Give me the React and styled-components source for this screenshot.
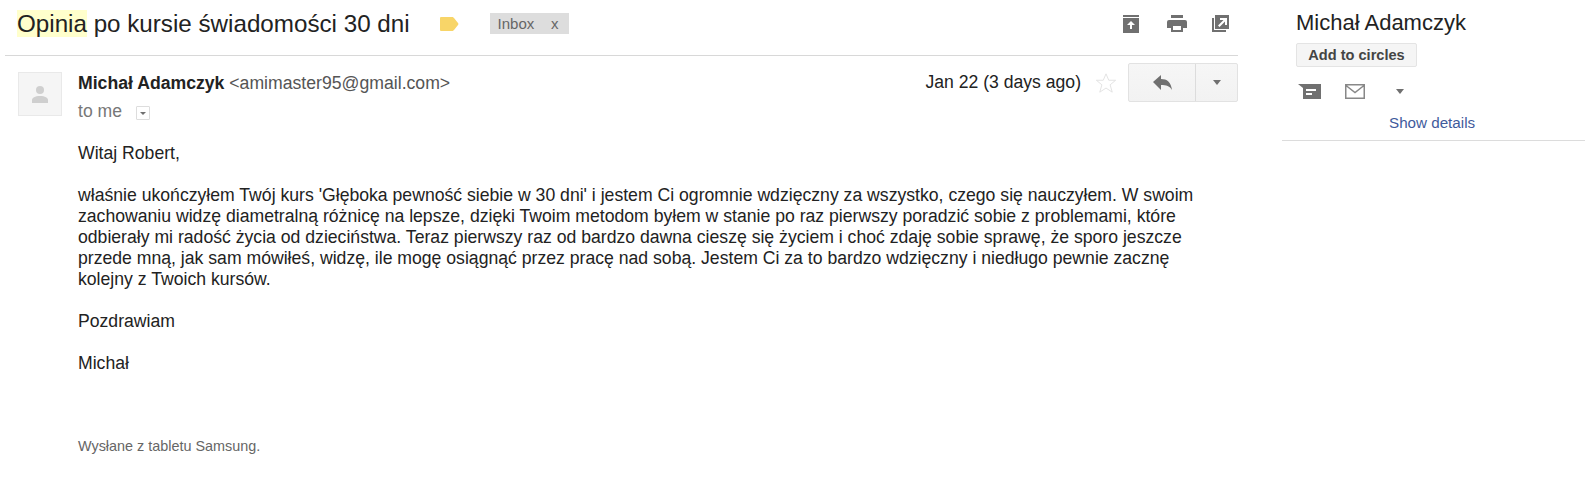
import React from 'react';
import styled, {createGlobalStyle} from 'styled-components';

const GlobalStyle = createGlobalStyle`
  html, body {
    margin: 0;
    background: #fff;
    color: #222;
    font-family: "Liberation Sans", Arial, sans-serif;
  }
`;

const Page = styled.div`
  display: flex;
  width: 1585px;
  height: 477px;
  overflow: hidden;
`;

const Main = styled.div`
  width: 1233px;
  margin-left: 5px;
`;

const Side = styled.aside`
  width: 303px;
  margin-left: 44px;
`;

const SubjectBar = styled.header`
  display: flex;
  align-items: center;
  height: 56px;
  padding: 0 0 8px 12px;
  box-sizing: border-box;
  border-bottom: 1px solid #d8d8d8;
`;

const Subject = styled.h1`
  margin: 0;
  font-size: 24.2px;
  font-weight: 400;
  line-height: 28px;
  color: #222;
`;

const Mark = styled.span`
  background: #ffffcc;
`;

const Tag = styled.svg`
  margin-left: 29px;
  width: 20px;
  height: 16px;
`;

const Label = styled.span`
  display: flex;
  justify-content: space-between;
  width: 79px;
  height: 21px;
  margin-left: 31px;
  padding: 0 10px 0 8px;
  box-sizing: border-box;
  background: #dddddd;
  color: #666;
  font-size: 15px;
  line-height: 21px;
`;

const Tools = styled.div`
  display: flex;
  align-items: center;
  gap: 25px;
  margin-left: auto;
  margin-right: 9px;
`;

const Icon = styled.svg`
  display: block;
  width: ${(p) => p.$w}px;
  height: ${(p) => p.$h}px;
  fill: ${(p) => p.$color || '#707070'};
`;

const OutlineIcon = styled.svg`
  display: block;
  width: ${(p) => p.$w}px;
  height: ${(p) => p.$h}px;
  fill: none;
  stroke: ${(p) => p.$color};
  stroke-width: ${(p) => p.$stroke}px;
`;

const Message = styled.div`
  display: flex;
  padding: 16px 0 0 13px;
`;

const Avatar = styled.div`
  display: flex;
  align-items: center;
  justify-content: center;
  width: 42px;
  height: 42px;
  border: 1px solid #e9e9e9;
  background: #f5f5f5;
  flex: none;
`;

const Content = styled.div`
  flex: 1;
  margin-left: 16px;
  margin-top: -8px;
`;

const TopRow = styled.div`
  display: flex;
  align-items: flex-start;
`;

const Sender = styled.div`
  padding-top: 9px;
  font-size: 17.65px;
  line-height: 20px;
  color: #555;
`;

const SenderName = styled.b`
  color: #222;
`;

const To = styled.div`
  display: flex;
  align-items: center;
  gap: 14px;
  margin-top: 8px;
  color: #777;
  font-size: 17.6px;
  line-height: 20px;
`;

const ToArrow = styled.span`
  display: flex;
  align-items: center;
  justify-content: center;
  width: 14px;
  height: 14px;
  margin-top: 4px;
  box-sizing: border-box;
  border: 1px solid #ddd;
  border-radius: 1px;
`;

const Caret = styled.i`
  display: block;
  width: 0;
  height: 0;
  border-style: solid;
  border-color: ${(p) => p.$color || '#707070'} transparent transparent;
  border-width: ${(p) => p.$h || 5}px ${(p) => p.$w || 4.5}px 0;
`;

const Meta = styled.div`
  display: flex;
  align-items: center;
  margin-left: auto;
  margin-top: -1px;
`;

const DateText = styled.span`
  font-size: 17.6px;
  color: #222;
  margin-right: 14px;
`;

const ReplyGroup = styled.div`
  display: flex;
  height: 37px;
  margin-left: 11px;
  border: 1px solid #e2e2e2;
  border-radius: 2px;
  background: linear-gradient(#f6f6f6, #f2f2f2);
`;

const ReplyBtn = styled.div`
  display: flex;
  align-items: center;
  justify-content: center;
  width: ${(p) => p.$w}px;
  & + & {
    border-left: 1px solid #dcdcdc;
  }
`;

const Body = styled.div`
  margin-top: 22px;
  font-size: 17.64px;
  line-height: 21px;
  color: #222;
`;

const Para = styled.p`
  margin: 0 0 ${(p) => p.$gap ?? 21}px;
  white-space: pre-line;
`;

const Signature = styled.p`
  margin: 64px 0 0;
  font-size: 14.4px;
  line-height: 16px;
  color: #666;
`;

const ContactName = styled.h2`
  margin: 0;
  padding: 11px 0 0 14px;
  font-size: 22px;
  font-weight: 400;
  line-height: 24px;
  color: #222;
`;

const CircleBtn = styled.div`
  width: 121px;
  height: 24px;
  margin: 8px 0 0 14px;
  box-sizing: border-box;
  border: 1px solid #e4e4e4;
  border-radius: 2px;
  background: #f5f5f5;
  color: #444;
  font-size: 14.6px;
  font-weight: 700;
  line-height: 22px;
  text-align: center;
`;

const ContactIcons = styled.div`
  display: flex;
  align-items: center;
  gap: 24px;
  height: 20px;
  margin-top: 14px;
  padding-left: 16px;
`;

const CaretSlot = styled.span`
  margin-left: 7px;
`;

const Details = styled.a`
  display: block;
  margin-top: 13px;
  padding: 0 0 8px 107px;
  border-bottom: 1px solid #dcdcdc;
  color: #3f5b9c;
  font-size: 15.2px;
  line-height: 18px;
`;

const App = () => {
  return (
    <Page>
      <GlobalStyle />
      <Main>
        <SubjectBar>
          <Subject><Mark>Opinia</Mark> po kursie świadomości 30 dni</Subject>
          <Tag viewBox="0 0 20 16">
            <path d="M2 1h11c1 0 1.500.5 2 1l4 5c.5.5.5 1.500 0 2l-4 5c-.5.5-1 1-2 1H2a1 1 0 0 1-1-1V2a1 1 0 0 1 1-1z" fill="#f8d568" />
          </Tag>
          <Label>Inbox<span>x</span></Label>
          <Tools>
            <Icon $w={19} $h={18} viewBox="0 0 19 18">
              <path d="M0 0h16v18H0zM0 2v1h16V2zM8 6l-4 4h3v4h2v-4h3z" fillRule="evenodd" />
            </Icon>
            <Icon $w={20} $h={17} viewBox="0 0 20 17">
              <path d="M4 0h12v3H4zM2 5h16a2 2 0 0 1 2 2v6h-4v4H4v-4H0V7a2 2 0 0 1 2-2z" />
              <path d="M6 11h8v4H6z" fill="#fff" />
            </Icon>
            <Icon $w={17} $h={17} viewBox="0 0 17 17">
              <path d="M3 0h14v14H3zM8 3v2h3.500L6 10.500 7.500 12 13 6.500V10h2V3z" fillRule="evenodd" />
              <path d="M0 3h2v12h12v2H0z" />
            </Icon>
          </Tools>
        </SubjectBar>
        <Message>
          <Avatar>
            <Icon $w={16} $h={17} $color="#cfcfcf" viewBox="0 0 16 17">
              <circle cx="8" cy="4" r="4" />
              <path d="M0 17v-3c0-2 3-4 8-4s8 2 8 4v3z" />
            </Icon>
          </Avatar>
          <Content>
            <TopRow>
              <div>
                <Sender><SenderName>Michał Adamczyk</SenderName> &lt;amimaster95@gmail.com&gt;</Sender>
                <To>to me <ToArrow><Caret $w={3} $h={3} /></ToArrow></To>
              </div>
              <Meta>
                <DateText>Jan 22 (3 days ago)</DateText>
                <OutlineIcon $w={22} $h={22} $color="#e0e0e0" $stroke={1} viewBox="0 0 24 24">
                  <path d="M12 2l3 7h7.500l-6 5 2.300 8L12 17.500 5.200 22l2.300-8-6-5H9z" />
                </OutlineIcon>
                <ReplyGroup>
                  <ReplyBtn $w={66}>
                    <Icon $w={19} $h={15} viewBox="0 0 19 15">
                      <path d="M8 0v4c6 0 10 3 11 11-2-4-6-5-11-5v5L0 7z" />
                    </Icon>
                  </ReplyBtn>
                  <ReplyBtn $w={41}><Caret /></ReplyBtn>
                </ReplyGroup>
              </Meta>
            </TopRow>
            <Body>
              <Para>Witaj Robert,</Para>
              <Para>{`właśnie ukończyłem Twój kurs 'Głęboka pewność siebie w 30 dni' i jestem Ci ogromnie wdzięczny za wszystko, czego się nauczyłem. W swoim
zachowaniu widzę diametralną różnicę na lepsze, dzięki Twoim metodom byłem w stanie po raz pierwszy poradzić sobie z problemami, które
odbierały mi radość życia od dzieciństwa. Teraz pierwszy raz od bardzo dawna cieszę się życiem i choć zdaję sobie sprawę, że sporo jeszcze
przede mną, jak sam mówiłeś, widzę, ile mogę osiągnąć przez pracę nad sobą. Jestem Ci za to bardzo wdzięczny i niedługo pewnie zacznę
kolejny z Twoich kursów.`}</Para>
              <Para>Pozdrawiam</Para>
              <Para $gap={0}>Michał</Para>
              <Signature>Wysłane z tabletu Samsung.</Signature>
            </Body>
          </Content>
        </Message>
      </Main>
      <Side>
        <ContactName>Michał Adamczyk</ContactName>
        <CircleBtn>Add to circles</CircleBtn>
        <ContactIcons>
          <Icon $w={23} $h={15} viewBox="0 0 23 15">
            <path d="M0 0h23v15H5V4zM8 5v2h10V5zM8 9v2h6V9z" fillRule="evenodd" />
          </Icon>
          <OutlineIcon $w={20} $h={15} $color="#888" $stroke={1.5} viewBox="0 0 20 15">
            <path d="M.75.750h18.500v13.500H.75zM1 1.500l9 7 9-7" />
          </OutlineIcon>
          <CaretSlot><Caret /></CaretSlot>
        </ContactIcons>
        <Details>Show details</Details>
      </Side>
    </Page>
  );
};

export default App;
